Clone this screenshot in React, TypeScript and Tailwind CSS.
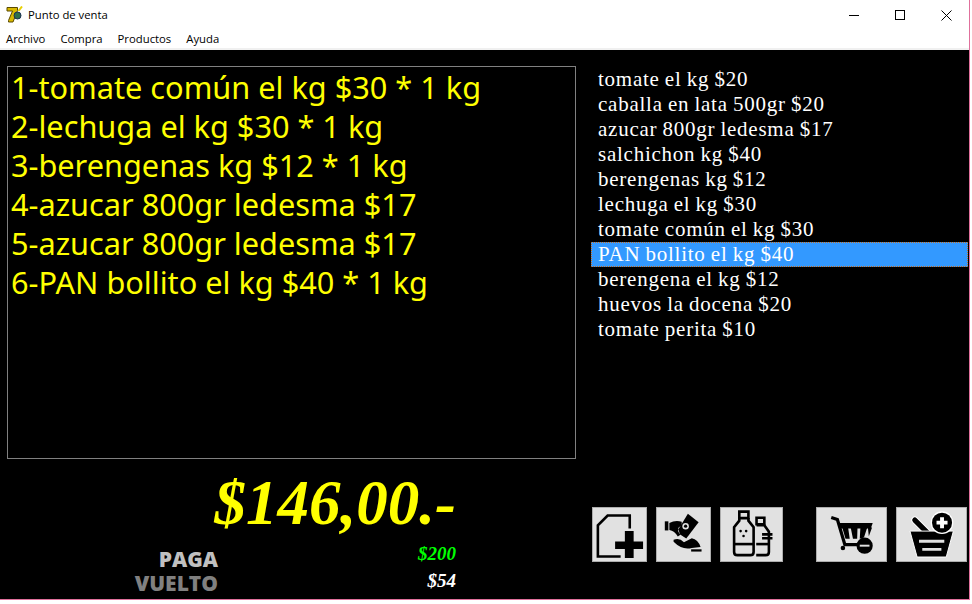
const saleLines = [
  '1-tomate común el kg $30 * 1 kg',
  '2-lechuga el kg $30 * 1 kg',
  '3-berengenas kg $12 * 1 kg',
  '4-azucar 800gr ledesma $17',
  '5-azucar 800gr ledesma $17',
  '6-PAN bollito el kg $40 * 1 kg',
];

const products = [
  'tomate el kg $20',
  'caballa en lata 500gr $20',
  'azucar 800gr ledesma $17',
  'salchichon kg $40',
  'berengenas kg $12',
  'lechuga el kg $30',
  'tomate común el kg $30',
  'PAN bollito el kg $40',
  'berengena el kg $12',
  'huevos la docena $20',
  'tomate perita $10',
];

const menus = ['Archivo', 'Compra', 'Productos', 'Ayuda'];

function AppIcon() {
  return (
    <svg width="18" height="18" viewBox="0 0 18 18" className="shrink-0">
      <path d="M1 1.5 L11.5 1.5 L11.5 4.5 L7 16 L2.5 16 L2.5 14.5 L6.5 5 L1 5 Z" fill="#d8b800" stroke="#5a4a00" strokeWidth="1" />
      <circle cx="11.5" cy="9.5" r="3.5" fill="#2f6f4a" stroke="#1c2f55" strokeWidth="1" />
      <path d="M12.5 5 L16 0.5" stroke="#e8d000" strokeWidth="2" />
    </svg>
  );
}

function WindowControls() {
  return (
    <div className="flex h-full">
      <div className="flex h-full w-[46px] items-center justify-center">
        <div className="h-px w-[10px] bg-black" />
      </div>
      <div className="flex h-full w-[46px] items-center justify-center">
        <div className="size-[10px] border border-black" />
      </div>
      <div className="flex h-full w-[46px] items-center justify-center">
        <svg width="11" height="11" viewBox="0 0 11 11">
          <path d="M0.5 0.5 L10.5 10.5 M10.5 0.5 L0.5 10.5" stroke="#000" strokeWidth="1" />
        </svg>
      </div>
    </div>
  );
}

function DocPlusIcon() {
  return (
    <svg viewBox="37 37 163 163" className="size-full">
      <path d="M150 100 V60 H82 L52 90 V186 H122" fill="none" stroke="#000" strokeWidth="8" />
      <path d="M135 108 H162 V140 H191 V163 H162 V191 H135 V163 H105 V140 H135 Z" fill="#000" />
    </svg>
  );
}

function HandMoneyIcon() {
  return (
    <svg viewBox="228 37 163 163" className="size-full">
      <path d="M252 78 H263 V106 H252 Z" fill="#000" />
      <path d="M266 83 Q284 73 304 79 L304 90 L294 98 Q290 110 300 119 L292 125 Q282 108 266 105 Z" fill="#000" />
      <path d="M323 55 L356 81 L318 131 L298 118 L294 102 Z" fill="#000" />
      <circle cx="316" cy="93" r="10" fill="#e1e1e1" />
      <circle cx="316" cy="93" r="5" fill="#000" />
      <path d="M279 135 Q296 127 311 142 L335 130 Q354 133 362 157 L335 160 Q306 168 279 141 Z" fill="#000" />
      <path d="M333 164 H365 V171 H333 Z" fill="#000" />
    </svg>
  );
}

function BottlesIcon() {
  return (
    <svg viewBox="420 37 187 163" className="size-full">
      <g fill="none" stroke="#000" strokeWidth="8">
        <path d="M476 48 H504 V68 H476 Z" />
        <path d="M476 68 V76 L460 96 V172 Q460 182 470 182 H510 Q520 182 520 172 V96 L504 76 V68" />
        <path d="M460 148 H520" />
        <path d="M529 67 H553 V87 H529 Z" />
        <path d="M529 90 H553 L567 110 V172 Q567 182 557 182 H528" />
        <path d="M528 148 H567" />
        <path d="M546 118 H578 M546 130 H578" />
      </g>
      <circle cx="480" cy="108" r="4" fill="#000" />
      <circle cx="497" cy="108" r="4" fill="#000" />
      <circle cx="489" cy="123" r="4" fill="#000" />
    </svg>
  );
}

function CartMinusIcon() {
  return (
    <svg viewBox="108 37 213 163" className="size-full">
      <path d="M152 66 L171 72 L194 150 H236" fill="none" stroke="#000" strokeWidth="10" />
      <path d="M175 83 H280 L274 100 H180 Z" fill="#000" />
      <path d="M186 97 H204 L209 132 H196 Z M212 97 H233 L232 132 H219 Z M242 97 H263 L253 128 L240 132 Z M265 97 H278 L268 124 Z" fill="#000" />
      <circle cx="188" cy="160" r="7" fill="#000" />
      <circle cx="255" cy="153" r="25" fill="#000" />
      <path d="M240 150 H270 V156 H240 Z" fill="#e1e1e1" />
    </svg>
  );
}

function BasketPlusIcon() {
  return (
    <svg viewBox="348 37 213 163" className="size-full">
      <path d="M403 74 L447 118" stroke="#fff" strokeWidth="22" strokeLinecap="round" />
      <path d="M403 74 L447 118" stroke="#000" strokeWidth="16" strokeLinecap="round" />
      <path d="M388 108 H522 L500 188 H410 Z" fill="#000" stroke="#fff" strokeWidth="3" />
      <path d="M416 135 H494 V144 H416 Z M426 160 H485 V169 H426 Z" fill="#e1e1e1" />
      <circle cx="487" cy="82" r="35" fill="#fff" />
      <circle cx="487" cy="82" r="31" fill="#000" />
      <path d="M481 65 H493 V76 H504 V88 H493 V99 H481 V88 H470 V76 H481 Z" fill="#fff" />
    </svg>
  );
}

function ToolButton({ className, children }: { className: string; children: React.ReactNode }) {
  return (
    <button className={`h-[55px] shrink-0 border border-[#adadad] bg-[#e1e1e1] ${className}`}>
      {children}
    </button>
  );
}

export default function App() {
  return (
    <div className="h-[604px] w-[972px] overflow-hidden bg-white">
      <div className="flex h-[600px] w-[970px] flex-col border-r border-b border-[#e0709c] font-['Open_Sans',sans-serif]">
        {/* Title bar */}
        <div className="flex h-[30px] items-center justify-between pl-[6px] pr-0">
          <div className="flex items-center gap-[4px]">
            <AppIcon />
            <span className="text-[11.3px] text-black">Punto de venta</span>
          </div>
          <WindowControls />
        </div>

        {/* Menu */}
        <div className="flex h-[20px] items-center gap-[15px] border-b-2 border-[#f0f0f0] pl-[6px] text-[11.3px] text-black">
          {menus.map((menu) => (
            <span key={menu}>{menu}</span>
          ))}
        </div>

        {/* Body */}
        <div className="flex min-h-0 flex-1 flex-col bg-black pt-[16px]">
          <div className="flex h-[393px]">
            <div className="ml-[7px] w-[569px] border border-[#808080] pt-[1px] pl-[3px] font-['Noto_Sans',sans-serif] text-[30.7px] leading-[39px] text-[#ffff00]">
              {saleLines.map((line) => (
                <div key={line}>{line}</div>
              ))}
            </div>
            <div className="ml-[15px] w-[377px] pt-[1px] font-['Liberation_Serif',serif] text-[21px] leading-[25px] tracking-[0.75px] [word-spacing:-0.8px] text-white">
              {products.map((product, i) => (
                <div
                  key={product}
                  className={i === 7 ? 'h-[25px] border border-dotted border-[#c46a1a] bg-[#3399ff] pl-[6px] leading-[23px]' : 'h-[25px] pl-[7px]'}
                >
                  {product}
                </div>
              ))}
            </div>
          </div>

          <div className="flex">
            {/* Totals */}
            <div className="flex w-[456px] flex-col pt-[7px]">
              <div className="text-right font-['Liberation_Serif',serif] text-[63px] leading-[74px] font-bold text-[#ffff00] italic">
                $146,00.-
              </div>
              <div className="flex pt-[7px]">
                <div className="w-[218px] text-right text-[21px] leading-[24px] font-extrabold">
                  <div className="text-[#c0c0c0]">PAGA</div>
                  <div className="text-[#808080]">VUELTO</div>
                </div>
                <div className="-mt-[7px] flex-1 text-right font-['Liberation_Serif',serif] text-[19px] leading-[27px] font-bold italic">
                  <div className="text-[#00ff00]">$200</div>
                  <div className="text-white">$54</div>
                </div>
              </div>
            </div>

            {/* Actions */}
            <div className="ml-[136px] flex pt-[48px]">
              <ToolButton className="w-[55px]"><DocPlusIcon /></ToolButton>
              <ToolButton className="ml-[9px] w-[55px]"><HandMoneyIcon /></ToolButton>
              <ToolButton className="ml-[9px] w-[63px]"><BottlesIcon /></ToolButton>
              <ToolButton className="ml-[33px] w-[71px]"><CartMinusIcon /></ToolButton>
              <ToolButton className="ml-[9px] w-[71px]"><BasketPlusIcon /></ToolButton>
            </div>
          </div>
        </div>
      </div>
    </div>
  );
}
